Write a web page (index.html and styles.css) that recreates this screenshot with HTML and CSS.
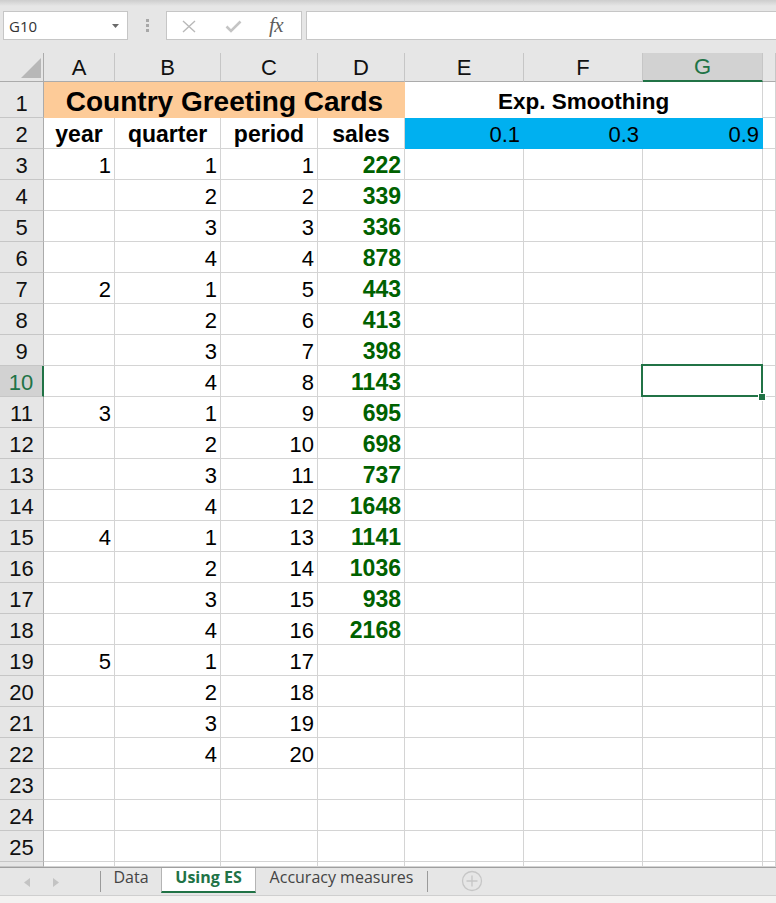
FILE: index.html
```html
<!DOCTYPE html>
<html>
<head>
<meta charset="utf-8">
<title>Using ES</title>
<link rel="stylesheet" href="styles.css">
</head>
<body>
<div class="app">
  <div class="fbar">
    <div class="namebox"><span>G10</span><svg class="caret" width="7" height="4" viewBox="0 0 7 4"><path d="M0 0H7L3.5 4Z" fill="#6a6a6a"/></svg></div>
    <div class="grip"><i></i><i></i><i></i></div>
    <div class="fbtns">
      <svg class="ic-x" width="14" height="13" viewBox="0 0 14 13"><path d="M1 1L13 12M13 1L1 12" stroke="#b9b9b9" stroke-width="1.4" fill="none"/></svg>
      <svg class="ic-ok" width="17" height="13" viewBox="0 0 17 13"><path d="M1.5 6.5L6 11L15.5 1.5" stroke="#c4c4c4" stroke-width="2.6" fill="none"/></svg>
      <span class="fx">fx</span>
    </div>
    <div class="finput"></div>
  </div>

  <div class="sheet">
    <div class="corner"><svg width="44" height="28" viewBox="0 0 44 28"><path d="M21 25H41V5Z" fill="#b7b7b7"/></svg></div>
    <div class="ch">A</div><div class="ch">B</div><div class="ch">C</div><div class="ch">D</div><div class="ch">E</div><div class="ch">F</div><div class="ch sel">G</div><div class="ch"></div>

    <div class="h">1</div><div class="title">Country Greeting Cards</div><div class="exp">Exp. Smoothing</div><div class="c"></div>

    <div class="h">2</div><div class="c hd">year</div><div class="c hd">quarter</div><div class="c hd">period</div><div class="c hd">sales</div><div class="c blue">0.1</div><div class="c blue">0.3</div><div class="c blue">0.9</div><div class="c"></div>

    <div class="h">3</div><div class="c">1</div><div class="c">1</div><div class="c">1</div><div class="c s">222</div><div class="c"></div><div class="c"></div><div class="c"></div><div class="c"></div>
    <div class="h">4</div><div class="c"></div><div class="c">2</div><div class="c">2</div><div class="c s">339</div><div class="c"></div><div class="c"></div><div class="c"></div><div class="c"></div>
    <div class="h">5</div><div class="c"></div><div class="c">3</div><div class="c">3</div><div class="c s">336</div><div class="c"></div><div class="c"></div><div class="c"></div><div class="c"></div>
    <div class="h">6</div><div class="c"></div><div class="c">4</div><div class="c">4</div><div class="c s">878</div><div class="c"></div><div class="c"></div><div class="c"></div><div class="c"></div>
    <div class="h">7</div><div class="c">2</div><div class="c">1</div><div class="c">5</div><div class="c s">443</div><div class="c"></div><div class="c"></div><div class="c"></div><div class="c"></div>
    <div class="h">8</div><div class="c"></div><div class="c">2</div><div class="c">6</div><div class="c s">413</div><div class="c"></div><div class="c"></div><div class="c"></div><div class="c"></div>
    <div class="h">9</div><div class="c"></div><div class="c">3</div><div class="c">7</div><div class="c s">398</div><div class="c"></div><div class="c"></div><div class="c"></div><div class="c"></div>
    <div class="h sel">10</div><div class="c"></div><div class="c">4</div><div class="c">8</div><div class="c s">1143</div><div class="c"></div><div class="c"></div><div class="c active"><span class="selbox"><span class="handle"></span></span></div><div class="c"></div>
    <div class="h">11</div><div class="c">3</div><div class="c">1</div><div class="c">9</div><div class="c s">695</div><div class="c"></div><div class="c"></div><div class="c"></div><div class="c"></div>
    <div class="h">12</div><div class="c"></div><div class="c">2</div><div class="c">10</div><div class="c s">698</div><div class="c"></div><div class="c"></div><div class="c"></div><div class="c"></div>
    <div class="h">13</div><div class="c"></div><div class="c">3</div><div class="c">11</div><div class="c s">737</div><div class="c"></div><div class="c"></div><div class="c"></div><div class="c"></div>
    <div class="h">14</div><div class="c"></div><div class="c">4</div><div class="c">12</div><div class="c s">1648</div><div class="c"></div><div class="c"></div><div class="c"></div><div class="c"></div>
    <div class="h">15</div><div class="c">4</div><div class="c">1</div><div class="c">13</div><div class="c s">1141</div><div class="c"></div><div class="c"></div><div class="c"></div><div class="c"></div>
    <div class="h">16</div><div class="c"></div><div class="c">2</div><div class="c">14</div><div class="c s">1036</div><div class="c"></div><div class="c"></div><div class="c"></div><div class="c"></div>
    <div class="h">17</div><div class="c"></div><div class="c">3</div><div class="c">15</div><div class="c s">938</div><div class="c"></div><div class="c"></div><div class="c"></div><div class="c"></div>
    <div class="h">18</div><div class="c"></div><div class="c">4</div><div class="c">16</div><div class="c s">2168</div><div class="c"></div><div class="c"></div><div class="c"></div><div class="c"></div>
    <div class="h">19</div><div class="c">5</div><div class="c">1</div><div class="c">17</div><div class="c"></div><div class="c"></div><div class="c"></div><div class="c"></div><div class="c"></div>
    <div class="h">20</div><div class="c"></div><div class="c">2</div><div class="c">18</div><div class="c"></div><div class="c"></div><div class="c"></div><div class="c"></div><div class="c"></div>
    <div class="h">21</div><div class="c"></div><div class="c">3</div><div class="c">19</div><div class="c"></div><div class="c"></div><div class="c"></div><div class="c"></div><div class="c"></div>
    <div class="h">22</div><div class="c"></div><div class="c">4</div><div class="c">20</div><div class="c"></div><div class="c"></div><div class="c"></div><div class="c"></div><div class="c"></div>
    <div class="h">23</div><div class="c"></div><div class="c"></div><div class="c"></div><div class="c"></div><div class="c"></div><div class="c"></div><div class="c"></div><div class="c"></div>
    <div class="h">24</div><div class="c"></div><div class="c"></div><div class="c"></div><div class="c"></div><div class="c"></div><div class="c"></div><div class="c"></div><div class="c"></div>
    <div class="h">25</div><div class="c"></div><div class="c"></div><div class="c"></div><div class="c"></div><div class="c"></div><div class="c"></div><div class="c"></div><div class="c"></div>
    <div class="h"></div><div class="c"></div><div class="c"></div><div class="c"></div><div class="c"></div><div class="c"></div><div class="c"></div><div class="c"></div><div class="c"></div>
  </div>

  <div class="tabs">
    <div class="nav">
      <svg width="6" height="9" viewBox="0 0 6 9"><path d="M6 0V9L0 4.5Z" fill="#c3c3c3"/></svg>
      <svg width="6" height="9" viewBox="0 0 6 9"><path d="M0 0V9L6 4.5Z" fill="#c3c3c3"/></svg>
    </div>
    <div class="sep"></div>
    <div class="tab t-data">Data</div>
    <div class="tab t-active">Using ES</div>
    <div class="tab t-acc">Accuracy measures</div>
    <div class="sep"></div>
    <svg class="plus" width="22" height="22" viewBox="0 0 22 22"><circle cx="11" cy="11" r="9.5" fill="none" stroke="#c6c6c6" stroke-width="1.3"/><path d="M11 5.5V16.5M5.5 11H16.5" stroke="#c6c6c6" stroke-width="1.3"/></svg>
  </div>
  <div class="status"></div>
</div>
</body>
</html>
```

FILE: styles.css
```css
html, body {
  margin: 0;
  padding: 0;
}
body {
  background: #e6e6e6;
  font-family: "Liberation Sans", Arial, sans-serif;
}
.app {
  width: 776px;
  height: 903px;
  overflow: hidden;
  display: flex;
  flex-direction: column;
  background: #e6e6e6;
}

/* formula bar */
.fbar {
  flex: none;
  height: 53px;
  box-sizing: border-box;
  padding: 11px 0 0 3px;
  display: flex;
  align-items: flex-start;
  background: linear-gradient(#cdcdcd 0px, #e6e6e6 6px);
}
.namebox {
  width: 125px;
  height: 29px;
  box-sizing: border-box;
  border: 1px solid #c6c6c6;
  background: #fff;
  display: flex;
  align-items: center;
  justify-content: space-between;
  padding: 0 8px 0 5px;
  font-family: "Open Sans", "Noto Sans", sans-serif;
  font-size: 15px;
  color: #333;
}
.caret {
  display: block;
  margin-top: 1px;
}
.grip {
  width: 3px;
  margin: 8px 17px 0 18px;
  display: flex;
  flex-direction: column;
  gap: 2px;
}
.grip i {
  display: block;
  width: 3px;
  height: 3px;
  background: #a8a8a8;
}
.fbtns {
  width: 136px;
  height: 29px;
  box-sizing: border-box;
  border: 1px solid #c6c6c6;
  background: #fff;
  display: flex;
  align-items: center;
  padding-left: 15px;
}
.ic-x {
  display: block;
  margin-top: 2px;
}
.ic-ok {
  display: block;
  margin-left: 29px;
  margin-top: 2px;
}
.fx {
  margin-left: 27px;
  font-family: "Liberation Serif", "Times New Roman", serif;
  font-style: italic;
  font-size: 21px;
  color: #5e5e5e;
  letter-spacing: -0.5px;
  line-height: 19px;
}
.finput {
  flex: 1;
  height: 29px;
  box-sizing: border-box;
  border: 1px solid #c6c6c6;
  border-right: none;
  background: #fff;
  margin-left: 4px;
}

/* grid */
.sheet {
  flex: none;
  display: grid;
  grid-template-columns: 44px 71px 106px 97px 87px 119px 119px 120px 13px;
  grid-template-rows: 29px 36px repeat(24, 31px) 5px;
  background: #fff;
  font-size: 22px;
  color: #000;
}
.sheet > div {
  box-sizing: border-box;
  min-width: 0;
}
.corner {
  background: #e6e6e6;
  border-right: 1px solid #ababab;
  border-bottom: 1px solid #ababab;
}
.corner svg {
  display: block;
}
.ch {
  background: #e6e6e6;
  border-right: 1px solid #c6c6c6;
  border-bottom: 1px solid #ababab;
  display: flex;
  align-items: flex-end;
  justify-content: center;
  color: #111;
}
.ch.sel {
  background: #d2d2d2;
  color: #217346;
  border-bottom: 2px solid #217346;
}
.h {
  background: #e6e6e6;
  border-right: 1px solid #ababab;
  border-bottom: 1px solid #c6c6c6;
  display: flex;
  align-items: flex-end;
  justify-content: center;
  color: #111;
}
.h.sel {
  background: #d2d2d2;
  color: #217346;
  border-right: 2px solid #217346;
}
.c {
  border-right: 1px solid #d4d4d4;
  border-bottom: 1px solid #d4d4d4;
  display: flex;
  align-items: flex-end;
  justify-content: flex-end;
  padding-right: 3px;
  white-space: nowrap;
}
.title {
  grid-column: span 4;
  background: #fdcb98;
  display: flex;
  align-items: flex-end;
  justify-content: center;
  font-size: 28px;
  font-weight: bold;
  white-space: nowrap;
}
.exp {
  grid-column: span 3;
  border-right: 1px solid #d4d4d4;
  display: flex;
  align-items: flex-end;
  justify-content: center;
  font-size: 22.5px;
  font-weight: bold;
  padding-bottom: 3px;
  white-space: nowrap;
}
.c.hd {
  justify-content: center;
  padding-right: 0;
  font-size: 23px;
  font-weight: bold;
}
.c.blue {
  background: #00b0f0;
  border-color: #00b0f0;
}
.c.s {
  font-size: 23px;
  font-weight: bold;
  color: #006100;
}
.c.active {
  position: relative;
}
.selbox {
  position: absolute;
  top: -2px;
  left: -2px;
  right: -1px;
  bottom: -1px;
  border: 2px solid #217346;
}
.handle {
  position: absolute;
  right: -4px;
  bottom: -5px;
  width: 6px;
  height: 6px;
  background: #217346;
  box-shadow: 0 0 0 1px #fff;
}

/* sheet tabs */
.tabs {
  flex: none;
  height: 29px;
  box-sizing: border-box;
  border-top: 1px solid #9f9f9f;
  border-bottom: 1px solid #cfcfcf;
  background: #e6e6e6;
  display: flex;
  align-items: flex-start;
  font-family: "Open Sans", "Noto Sans", sans-serif;
  font-size: 16px;
  color: #444;
}
.nav {
  width: 100px;
  height: 27px;
  display: flex;
  align-items: center;
  padding-left: 24px;
  box-sizing: border-box;
  gap: 23px;
}
.nav svg {
  display: block;
  margin-top: 2px;
}
.sep {
  width: 1px;
  height: 21px;
  margin-top: 3px;
  background: #9a9a9a;
}
.tab {
  height: 26px;
  box-sizing: border-box;
  padding-top: 1px;
  line-height: 16px;
  text-align: center;
  white-space: nowrap;
}
.t-data {
  width: 60px;
}
.t-active {
  width: 95px;
  background: #fff;
  border-left: 1px solid #b4b4b4;
  border-right: 1px solid #b4b4b4;
  border-bottom: 2px solid #217346;
  color: #217346;
  font-weight: bold;
  height: 25px;
}
.t-acc {
  width: 171px;
}
.plus {
  display: block;
  margin-left: 33px;
  margin-top: 2px;
}
.status {
  flex: 1;
  background: #f3f2f1;
}
```
